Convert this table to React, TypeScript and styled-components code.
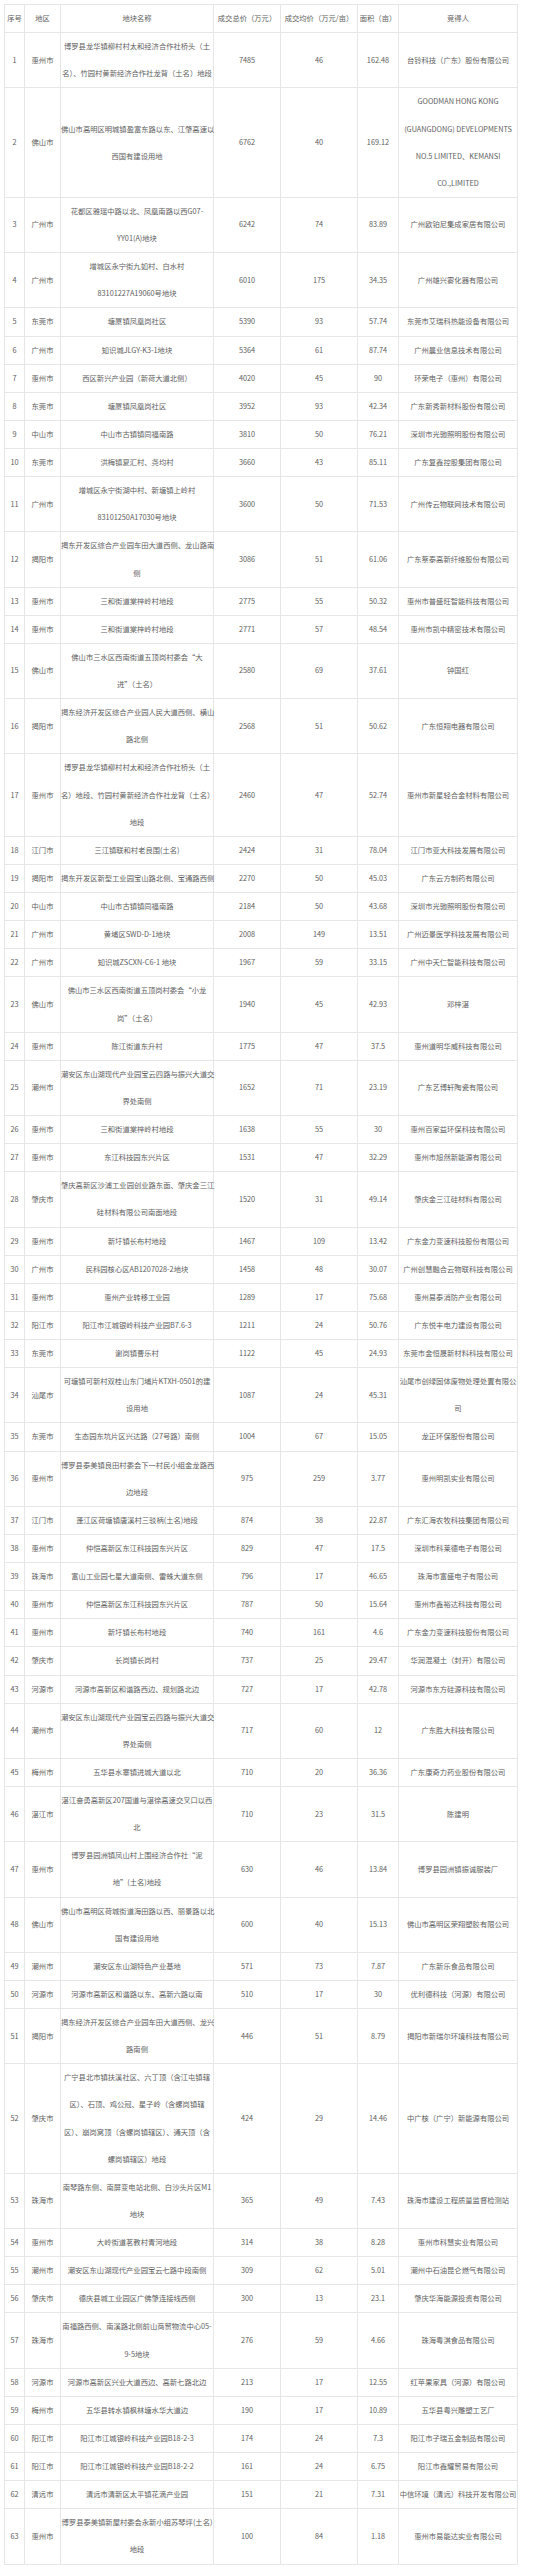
import styled, { createGlobalStyle } from "styled-components";

const GlobalStyle = createGlobalStyle`
  html, body {
    margin: 0;
    padding: 0;
    background: #ffffff;
  }
  body {
    font-family: "Noto Sans CJK SC", "Noto Sans", sans-serif;
  }
`;

type Land = [string, string, string, string, string, string, string];

// 序号, 地区, 地块名称, 成交总价, 成交均价, 面积, 竞得人 ("\n" = 换行)
const lands: Land[] = [
  ["1", "惠州市", "博罗县龙华镇柳村村太和经济合作社桥头（土\n名）、竹园村黄新经济合作社龙背（土名）地段", "7485", "46", "162.48", "台铃科技（广东）股份有限公司"],
  ["2", "佛山市", "佛山市高明区明城镇盈富东路以东、江肇高速以\n西国有建设用地", "6762", "40", "169.12", "GOODMAN HONG KONG\n(GUANGDONG) DEVELOPMENTS\nNO.5 LIMITED、KEMANSI\nCO.,LIMITED"],
  ["3", "广州市", "花都区雅瑶中路以北、凤凰南路以西G07-\nYY01(A)地块", "6242", "74", "83.89", "广州欧铂尼集成家居有限公司"],
  ["4", "广州市", "增城区永宁街九如村、白水村\n83101227A19060号地块", "6010", "175", "34.35", "广州雄兴雾化器有限公司"],
  ["5", "东莞市", "塘厦镇凤凰岗社区", "5390", "93", "57.74", "东莞市艾瑞科热能设备有限公司"],
  ["6", "广州市", "知识城JLGY-K3-1地块", "5364", "61", "87.74", "广州晨业信息技术有限公司"],
  ["7", "惠州市", "西区新兴产业园（新荷大道北侧）", "4020", "45", "90", "环荣电子（惠州）有限公司"],
  ["8", "东莞市", "塘厦镇凤凰岗社区", "3952", "93", "42.34", "广东新秀新材料股份有限公司"],
  ["9", "中山市", "中山市古镇镇同福南路", "3810", "50", "76.21", "深圳市光驰照明股份有限公司"],
  ["10", "东莞市", "洪梅镇夏汇村、尧均村", "3660", "43", "85.11", "广东复鑫控股集团有限公司"],
  ["11", "广州市", "增城区永宁街湖中村、新塘镇上岭村\n83101250A17030号地块", "3600", "50", "71.53", "广州传云物联网技术有限公司"],
  ["12", "揭阳市", "揭东开发区综合产业园车田大道西侧、龙山路南\n侧", "3086", "51", "61.06", "广东蔡泰高新纤维股份有限公司"],
  ["13", "惠州市", "三和街道棠梓岭村地段", "2775", "55", "50.32", "惠州市普盛旺智能科技有限公司"],
  ["14", "惠州市", "三和街道棠梓岭村地段", "2771", "57", "48.54", "惠州市凯中精密技术有限公司"],
  ["15", "佛山市", "佛山市三水区西南街道五顶岗村委会“大\n进”（土名）", "2580", "69", "37.61", "钟国红"],
  ["16", "揭阳市", "揭东经济开发区综合产业园人民大道西侧、横山\n路北侧", "2568", "51", "50.62", "广东恒翔电器有限公司"],
  ["17", "惠州市", "博罗县龙华镇柳村村太和经济合作社桥头（土\n名）地段、竹园村黄新经济合作社龙背（土名）\n地段", "2460", "47", "52.74", "惠州市新星轻合金材料有限公司"],
  ["18", "江门市", "三江镇联和村老良围(土名)", "2424", "31", "78.04", "江门市亚大科技发展有限公司"],
  ["19", "揭阳市", "揭东开发区新型工业园宝山路北侧、宝通路西侧", "2270", "50", "45.03", "广东云方制药有限公司"],
  ["20", "中山市", "中山市古镇镇同福南路", "2184", "50", "43.68", "深圳市光驰照明股份有限公司"],
  ["21", "广州市", "黄埔区SWD-D-1地块", "2008", "149", "13.51", "广州迈景医学科技发展有限公司"],
  ["22", "广州市", "知识城ZSCXN-C6-1 地块", "1967", "59", "33.15", "广州中天仁智能科技有限公司"],
  ["23", "佛山市", "佛山市三水区西南街道五顶岗村委会“小龙\n岗”（土名）", "1940", "45", "42.93", "邓梓湛"],
  ["24", "惠州市", "陈江街道东升村", "1775", "47", "37.5", "惠州道明华威科技有限公司"],
  ["25", "潮州市", "潮安区东山湖现代产业园宝云四路与振兴大道交\n界处南侧", "1652", "71", "23.19", "广东艺博轩陶瓷有限公司"],
  ["26", "惠州市", "三和街道棠梓岭村地段", "1638", "55", "30", "惠州百家益环保科技有限公司"],
  ["27", "惠州市", "东江科技园东兴片区", "1531", "47", "32.29", "惠州市旭然新能源有限公司"],
  ["28", "肇庆市", "肇庆高新区沙浦工业园创业路东面、肇庆金三江\n硅材料有限公司南面地段", "1520", "31", "49.14", "肇庆金三江硅材料有限公司"],
  ["29", "惠州市", "新圩镇长布村地段", "1467", "109", "13.42", "广东金力变速科技股份有限公司"],
  ["30", "广州市", "民科园核心区AB1207028-2地块", "1458", "48", "30.07", "广州创慧融合云物联科技有限公司"],
  ["31", "惠州市", "惠州产业转移工业园", "1289", "17", "75.68", "惠州易泰消防产业有限公司"],
  ["32", "阳江市", "阳江市江城银岭科技产业园B7.6-3", "1211", "24", "50.76", "广东悦丰电力建设有限公司"],
  ["33", "东莞市", "谢岗镇曹乐村", "1122", "45", "24.93", "东莞市金恒晟新材料科技有限公司"],
  ["34", "汕尾市", "可塘镇可新村双桂山东门埔片KTXH-0501的建\n设用地", "1087", "24", "45.31", "汕尾市创绿固体废物处理处置有限公\n司"],
  ["35", "东莞市", "生态园东坑片区兴达路（27号路）南侧", "1004", "67", "15.05", "龙正环保股份有限公司"],
  ["36", "惠州市", "博罗县泰美镇良田村委会下一村民小组金龙路西\n边地段", "975", "259", "3.77", "惠州明凯实业有限公司"],
  ["37", "江门市", "蓬江区荷塘镇唐溪村三驳柄(土名)地段", "874", "38", "22.87", "广东汇海农牧科技集团有限公司"],
  ["38", "惠州市", "仲恺高新区东江科技园东兴片区", "829", "47", "17.5", "深圳市科莱德电子有限公司"],
  ["39", "珠海市", "富山工业园七星大道南侧、雷蛛大道东侧", "796", "17", "46.65", "珠海市富盛电子有限公司"],
  ["40", "惠州市", "仲恺高新区东江科技园东兴片区", "787", "50", "15.64", "惠州市鑫裕达科技有限公司"],
  ["41", "惠州市", "新圩镇长布村地段", "740", "161", "4.6", "广东金力变速科技股份有限公司"],
  ["42", "肇庆市", "长岗镇长岗村", "737", "25", "29.47", "华润混凝土（封开）有限公司"],
  ["43", "河源市", "河源市高新区和谐路西边、规划路北边", "727", "17", "42.78", "河源市东方硅源科技有限公司"],
  ["44", "潮州市", "潮安区东山湖现代产业园宝云四路与振兴大道交\n界处南侧", "717", "60", "12", "广东胜大科技有限公司"],
  ["45", "梅州市", "五华县水寨镇进城大道以北", "710", "20", "36.36", "广东康奇力药业股份有限公司"],
  ["46", "湛江市", "湛江奋勇高新区207国道与湛徐高速交叉口以西\n北", "710", "23", "31.5", "陈建明"],
  ["47", "惠州市", "博罗县园洲镇凤山村上围经济合作社“泥\n地”(土名)地段", "630", "46", "13.84", "博罗县园洲镇振诚服装厂"],
  ["48", "佛山市", "佛山市高明区荷城街道海田路以西、丽景路以北\n国有建设用地", "600", "40", "15.13", "佛山市高明区荣翔塑胶有限公司"],
  ["49", "潮州市", "潮安区东山湖特色产业基地", "571", "73", "7.87", "广东新乐食品有限公司"],
  ["50", "河源市", "河源市高新区和谐路以东、高新六路以南", "510", "17", "30", "优利德科技（河源）有限公司"],
  ["51", "揭阳市", "揭东经济开发区综合产业园车田大道西侧、龙兴\n路南侧", "446", "51", "8.79", "揭阳市新瑞尔环境科技有限公司"],
  ["52", "肇庆市", "广宁县北市镇扶溪社区、六丁顶（含江屯镇辖\n区）、石顶、鸡公冠、星子岭（含螺岗镇辖\n区）、崩岗窝顶（含螺岗镇辖区）、通天顶（含\n螺岗镇辖区）地段", "424", "29", "14.46", "中广核（广宁）新能源有限公司"],
  ["53", "珠海市", "南琴路东侧、南屏变电站北侧、白沙头片区M1\n地块", "365", "49", "7.43", "珠海市建设工程质量监督检测站"],
  ["54", "惠州市", "大岭街道茗教村青河地段", "314", "38", "8.28", "惠州市科慧实业有限公司"],
  ["55", "潮州市", "潮安区东山湖现代产业园宝云七路中段南侧", "309", "62", "5.01", "潮州中石油昆仑燃气有限公司"],
  ["56", "肇庆市", "德庆县城工业园区广佛肇连接线西侧", "300", "13", "23.1", "肇庆华海能源投资有限公司"],
  ["57", "珠海市", "南福路西侧、南溪路北侧前山商贸物流中心05-\n9-5地块", "276", "59", "4.66", "珠海粤淇食品有限公司"],
  ["58", "河源市", "河源市高新区兴业大道西边、高新七路北边", "213", "17", "12.55", "红苹果家具（河源）有限公司"],
  ["59", "梅州市", "五华县转水镇枫林塘水华大道边", "190", "17", "10.89", "五华县粤兴雕塑工艺厂"],
  ["60", "阳江市", "阳江市江城银岭科技产业园B18-2-3", "174", "24", "7.3", "阳江市子瑞五金制品有限公司"],
  ["61", "阳江市", "阳江市江城银岭科技产业园B18-2-2", "161", "24", "6.75", "阳江市鑫耀贸易有限公司"],
  ["62", "清远市", "清远市清新区太平镇花滴产业园", "151", "21", "7.31", "中信环境（清远）科技开发有限公司"],
  ["63", "惠州市", "博罗县泰美镇新屋村委会永新小组苏琴坪(土名)\n地段", "100", "84", "1.18", "惠州市易能达实业有限公司"],
];

const headers = ["序号", "地区", "地块名称", "成交总价（万元）", "成交均价（万元/亩）", "面积（亩）", "竞得人"];
const colWidths = [20, 36, 153, 67, 77, 41, 119];

const Page = styled.div`
  padding: 4px;
  background: #ffffff;
`;

const Table = styled.table`
  width: 513px;
  table-layout: fixed;
  border-collapse: collapse;
  color: #5e5e5e;
  font-size: 7.3px;
  line-height: 27.13px;
`;

const Col = styled.col<{ $w: number }>`
  width: ${(p) => p.$w}px;
`;

const HeadCell = styled.th`
  border: 1px solid #e6e6e6;
  padding: 0;
  font-weight: normal;
  text-align: center;
  vertical-align: middle;
  white-space: nowrap;
`;

const Cell = styled.td`
  border: 1px solid #e6e6e6;
  padding: 0;
  text-align: center;
  vertical-align: middle;
  white-space: nowrap;
  overflow: visible;
`;

const Line = styled.div`
  white-space: nowrap;
`;

const MultiLine = ({ text }: { text: string }) => (
  <>
    {text.split("\n").map((l, i) => (
      <Line key={i}>{l}</Line>
    ))}
  </>
);

export default function App() {
  return (
    <Page>
      <GlobalStyle />
      <Table>
        <colgroup>
          {colWidths.map((w, i) => (
            <Col key={i} $w={w} />
          ))}
        </colgroup>
        <thead>
          <tr>
            {headers.map((h) => (
              <HeadCell key={h}>{h}</HeadCell>
            ))}
          </tr>
        </thead>
        <tbody>
          {lands.map((row) => (
            <tr key={row[0]}>
              {row.map((v, i) => (
                <Cell key={i}>
                  <MultiLine text={v} />
                </Cell>
              ))}
            </tr>
          ))}
        </tbody>
      </Table>
    </Page>
  );
}
